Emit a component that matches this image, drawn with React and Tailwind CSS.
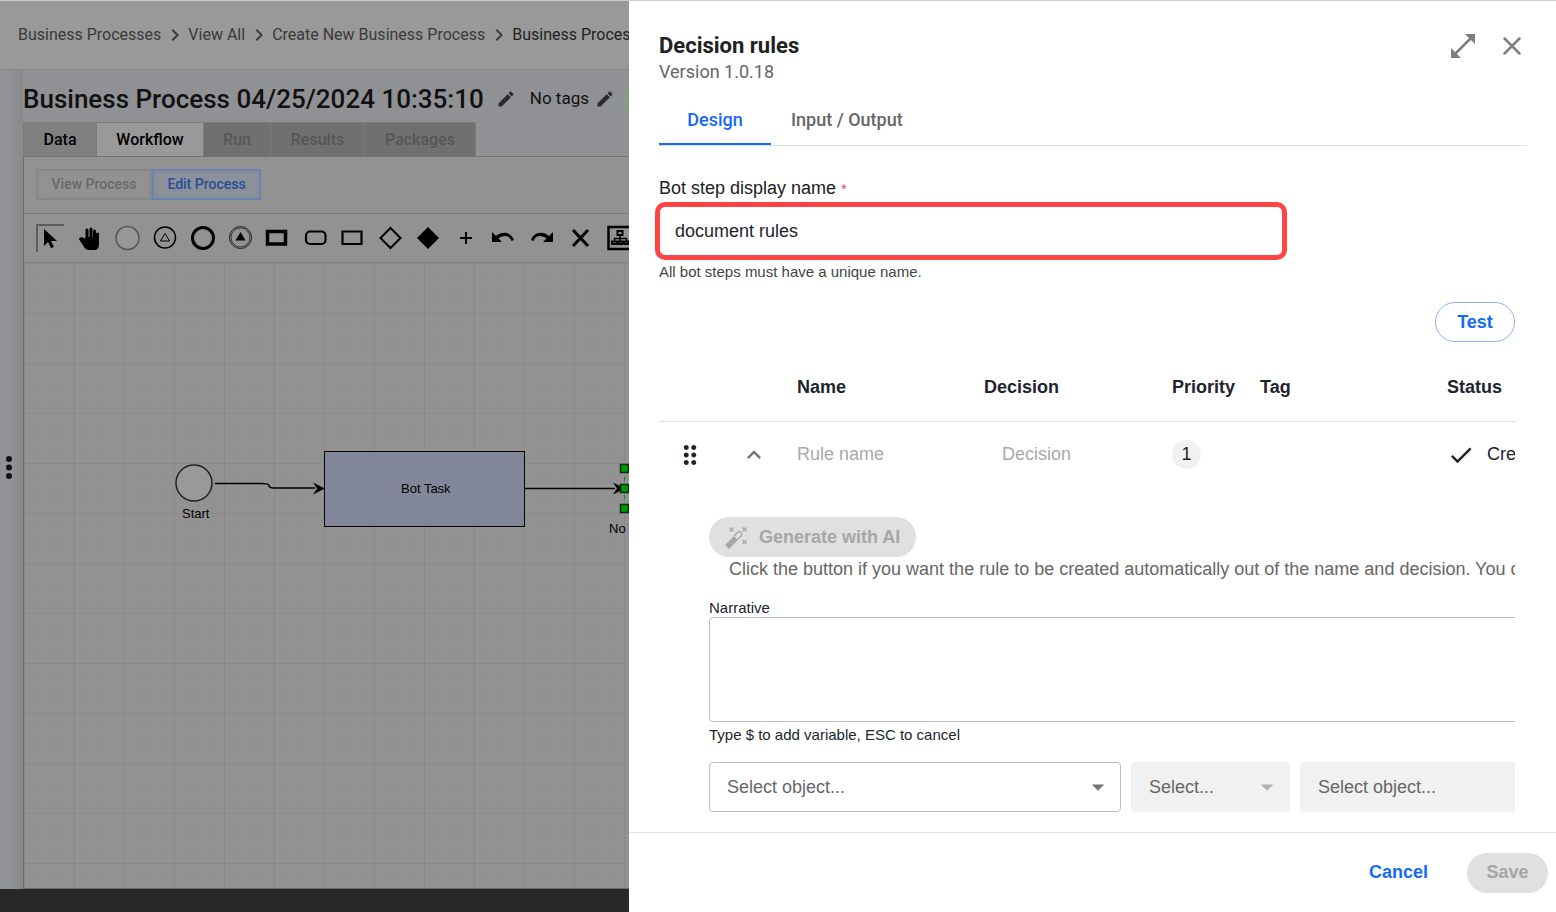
import React, { useState } from 'react';
import {
  MdArrowDropDown,
  MdCheck,
  MdChevronRight,
  MdDragIndicator,
  MdEdit,
  MdExpandLess,
} from 'react-icons/md';

const breadcrumbs = ['Business Processes', 'View All', 'Create New Business Process'];

const tabs = [
  { name: 'Data', style: 'w-[74px] bg-[#808080] text-black' },
  { name: 'Workflow', style: 'w-[107px] bg-[#999999] text-black' },
  { name: 'Run', style: 'w-[67px] bg-[#707070] text-[#565656]', disabled: true },
  { name: 'Results', style: 'w-[94px] bg-[#707070] text-[#565656]', disabled: true },
  { name: 'Packages', style: 'w-[111px] bg-[#707070] text-[#565656]', disabled: true },
];

const tools = [
  {
    name: 'Select',
    icon: <path d="M8 5v17l4-4 3 6 3-1-3-6h6z" fill="black" />,
  },
  {
    name: 'Pan',
    icon: (
      <g stroke="black" strokeLinecap="round" strokeLinejoin="round">
        <path d="M13 6v9M17 5v9M20.500 7v8M23.500 10v7" strokeWidth="3" />
        <path d="M12 14h12v6q0 5-4 5h-5q-3 0-5-4l-4-6q2-2 6 2z" strokeWidth="2" fill="black" />
      </g>
    ),
  },
  {
    name: 'Start event',
    icon: <circle cx="15.500" cy="14" r="11.500" fill="#979797" stroke="#555" strokeWidth="1.500" />,
  },
  {
    name: 'Signal event',
    icon: (
      <g stroke="black" fill="none">
        <circle cx="15" cy="13.500" r="10.500" strokeWidth="1.500" />
        <path d="M15 9.500l4.500 7.500h-9z" />
      </g>
    ),
  },
  {
    name: 'End event',
    icon: <circle cx="15" cy="14" r="10.500" fill="none" stroke="black" strokeWidth="3" />,
  },
  {
    name: 'Signal end event',
    icon: (
      <g>
        <circle cx="14.500" cy="13.500" r="11" fill="none" stroke="black" strokeWidth=".8" />
        <circle cx="14.500" cy="13.500" r="9.500" fill="none" stroke="black" strokeWidth=".6" />
        <path d="M14.500 8l5 8.500h-10z" fill="black" />
      </g>
    ),
  },
  {
    name: 'Bold task',
    icon: <path d="M3.500 7.500h18v12.500h-18z" fill="none" stroke="black" strokeWidth="3.500" />,
  },
  {
    name: 'Rounded task',
    icon: <rect x="4" y="7.500" width="19.500" height="12.500" rx="4" fill="none" stroke="black" strokeWidth="2.200" />,
  },
  {
    name: 'Task',
    icon: <path d="M2.500 7.500h19V20h-19z" fill="none" stroke="black" strokeWidth="2.200" />,
  },
  {
    name: 'Gateway',
    icon: <path d="M12.500 4l10 10-10 10-10-10z" fill="none" stroke="black" strokeWidth="2" />,
  },
  {
    name: 'Filled gateway',
    icon: <path d="M12 3l11 11-11 11-11-11z" fill="black" />,
  },
  {
    name: 'Add',
    icon: <path d="M12 8v12M6 14h12" stroke="black" strokeWidth="2" />,
  },
  {
    name: 'Undo',
    icon: <path d="M0 8v10h10l-3.500-3.500c6-4 11-3 13 2.500l2.500-1c-3-7.500-11-9.500-18-4z" fill="black" />,
  },
  {
    name: 'Redo',
    icon: <path d="M23 8v10H13l3.500-3.500c-6-4-11-3-13 2.500l-2.500-1c3-7.500 11-9.500 18-4z" fill="black" />,
  },
  {
    name: 'Delete',
    icon: <path d="M5 6l15 16M20 6L5 22" stroke="black" strokeWidth="3" />,
  },
  {
    name: 'Auto layout',
    icon: (
      <g fill="none" stroke="black">
        <path d="M2.500 3h24v22h-24z" strokeWidth="2.500" />
        <path d="M11.500 7h5v4h-5zM6 17.500h5V20H6zM12.500 17.500h4V20h-4zM18.500 17.500h4V20h-4z" strokeWidth="2" />
        <path d="M14 11v6M8.500 17v-2.500h12V17" strokeWidth="1.500" />
      </g>
    ),
  },
];

const ProcessDiagram = () => (
  <svg className="block" width="605" height="300" fill="none" fontFamily="'Liberation Sans', Arial, sans-serif" fontSize="13">
    <circle cx="170" cy="220" r="18" fill="#999999" stroke="#222222" strokeWidth="1.500" />
    <text x="158" y="255" fill="black">Start</text>
    <path d="M191 220.500h46q8 0 8 2t4 2.500h42" stroke="black" strokeWidth="1.500" />
    <path d="M301 225.500l-12-6 4 6-4 6z" fill="black" />
    <rect x="300.500" y="188.500" width="200" height="75" fill="#818799" stroke="black" />
    <text x="377" y="230" fill="black">Bot Task</text>
    <path d="M501 225.500h90" stroke="black" strokeWidth="1.500" />
    <path d="M601 225.500l-12-6 4 6-4 6z" fill="black" />
    <path d="M600.500 205v42" stroke="#009900" strokeDasharray="4 5" />
    {[205.5, 225.5, 245.5].map((y) => (
      <rect key={y} x="596.500" y={y - 4} width="8" height="8" fill="#009900" stroke="#0b2b0b" strokeWidth="1.500" />
    ))}
    <text x="585" y="270" fill="black">No</text>
  </svg>
);

const ProcessPage = () => (
  <main className="flex min-w-0 flex-col overflow-hidden whitespace-nowrap bg-[#8f9194] font-[Roboto,sans-serif]">
    <nav className="flex h-[69px] shrink-0 items-center border-b border-[#858688] bg-[#999999] pl-[18px] text-[16px] text-[#3a3a3a]">
      {breadcrumbs.map((name) => (
        <React.Fragment key={name}>
          <a href="#" className="shrink-0">{name}</a>
          <MdChevronRight className="mr-px ml-0.5 size-6 shrink-0" />
        </React.Fragment>
      ))}
      <span className="min-w-0 overflow-hidden text-[#222222]">Business Process</span>
    </nav>

    <div className="flex min-h-0 flex-1">
      <div className="flex w-[23px] shrink-0 items-center bg-linear-to-r from-[#909295] from-40% to-[#87898b] pb-6 pl-[6px]">
        <svg width="6" height="24" viewBox="0 0 6 24" fill="#111">
          <circle cx="3" cy="3" r="3" />
          <circle cx="3" cy="11.500" r="3" />
          <circle cx="3" cy="20" r="3" />
        </svg>
      </div>

      <div className="flex min-w-0 flex-1 flex-col">
        <div className="flex h-[52px] shrink-0 items-center pt-1.5 text-[#111]">
          <h1 className="text-[26px] font-medium">Business Process 04/25/2024 10:35:10</h1>
          <button aria-label="Edit name" className="ml-3 text-[#2a2a2a]"><MdEdit className="size-5" /></button>
          <span className="ml-3.5 text-[17px]">No tags</span>
          <button aria-label="Edit tags" className="ml-1.5 text-[#2a2a2a]"><MdEdit className="size-5" /></button>
          <span className="ml-2 h-5 w-16 shrink-0 bg-[#839c83]" />
        </div>

        <div className="flex h-[35px] shrink-0 border-b border-[#727272]">
          {tabs.map((tab) => (
            <button
              key={tab.name}
              disabled={tab.disabled}
              className={`h-[34px] shrink-0 border-t border-r border-[#7b7b7b] text-[16px] font-medium first:border-l ${tab.style}`}
            >
              {tab.name}
            </button>
          ))}
        </div>

        <div className="flex min-h-0 flex-1 flex-col border-b border-l border-[#6c6c6c] bg-[#929292]">
          <div className="flex h-14 shrink-0 items-start pt-3 pl-3 text-[14px] font-medium">
            <button disabled className="h-[31px] w-[116px] border border-[#858585] text-[#6a6a6a] shadow-[inset_0_0_4px_#858585]">
              View Process
            </button>
            <button className="h-[31px] w-[109px] border border-[#6480b0] bg-[#8b909a] text-[#274f97] shadow-[inset_0_0_4px_#6480b0]">
              Edit Process
            </button>
          </div>

          <div className="flex h-[50px] shrink-0 items-center gap-2.5 border-y border-t-[#7c7c7c] border-b-[#808080] pl-3">
            {tools.map((tool, i) => (
              <button
                key={tool.name}
                aria-label={tool.name}
                className={`size-7 shrink-0 ${i === 0 ? 'shadow-[inset_2px_2px_0_#5c5c5c]' : ''}`}
              >
                <svg viewBox="0 0 28 28" className="size-7">{tool.icon}</svg>
              </button>
            ))}
          </div>

          <div className="min-h-0 flex-1 overflow-hidden bg-[linear-gradient(#898989_1px,transparent_1px),linear-gradient(90deg,#898989_1px,transparent_1px),linear-gradient(#909090_1px,transparent_1px),linear-gradient(90deg,#909090_1px,transparent_1px)] bg-[size:50px_50px,50px_50px,12.5px_12.5px,12.5px_12.5px]">
            <ProcessDiagram />
          </div>
        </div>
      </div>
    </div>
    <footer className="h-[23px] shrink-0 bg-[#282828]" />
  </main>
);

const ObjectSelect = ({ label, placeholder, width, disabled }) => (
  <div className={`relative shrink-0 ${width}`}>
    <select
      aria-label={label}
      disabled={disabled}
      className={`h-[50px] w-full appearance-none rounded border pl-[17px] text-[18px] text-[#666666] opacity-100 ${
        disabled ? 'border-[#f1f1f1] bg-[#f1f1f1]' : 'border-[#bdbdbd] bg-white'
      }`}
    >
      <option>{placeholder}</option>
    </select>
    <MdArrowDropDown
      className={`pointer-events-none absolute top-2.5 right-2 size-[30px] ${disabled ? 'text-[#b0b0b0]' : 'text-[#757575]'}`}
    />
  </div>
);

const RulesTable = () => (
  <div className="mr-3 overflow-hidden">
    <table className="w-[1120px] table-fixed text-left text-[18px] text-[#20252d]">
      <colgroup>
        <col className="w-[70px]" />
        <col className="w-[68px]" />
        <col className="w-[187px]" />
        <col className="w-[188px]" />
        <col className="w-[88px]" />
        <col className="w-[187px]" />
        <col />
      </colgroup>
      <thead>
        <tr className="h-[67px] border-b border-[#dddddd]">
          <th />
          <th />
          <th>Name</th>
          <th>Decision</th>
          <th>Priority</th>
          <th>Tag</th>
          <th>Status</th>
        </tr>
      </thead>
      <tbody>
        <tr className="h-[67px]">
          <td className="pl-4">
            <button aria-label="Move rule" className="block"><MdDragIndicator className="size-[30px]" /></button>
          </td>
          <td className="pl-[11px]">
            <button aria-label="Collapse rule" className="block text-[#757575]"><MdExpandLess className="size-7" /></button>
          </td>
          <td>
            <input aria-label="Rule name" placeholder="Rule name" className="w-40 placeholder:text-[#a9a9a9]" />
          </td>
          <td className="pl-[18px]">
            <input aria-label="Decision" placeholder="Decision" className="w-36 placeholder:text-[#a9a9a9]" />
          </td>
          <td>
            <span className="flex size-[29px] items-center justify-center rounded-full bg-[#f1f1f1]">1</span>
          </td>
          <td />
          <td>
            <span className="flex items-center gap-3">
              <MdCheck className="size-7" />
              Created
            </span>
          </td>
        </tr>
        <tr>
          <td colSpan={7} className="pt-[29px] pl-[50px]">
            <button disabled className="flex h-10 w-[207px] items-center gap-2.5 rounded-full bg-[#e0e0e0] pl-4 font-bold text-[#a6a6a6]">
              <svg width="24" height="24" viewBox="0 0 24 24" fill="none" stroke="currentColor">
                <path d="M2 22L11 13" strokeWidth="5.500" />
                <path d="M9 11l4-4q1-1 2 0l1.500 1.500q1 1 0 2l-4 4" strokeWidth="1.400" />
                <path d="M4.500 2.500l4 4m0-4l-4 4M17.500 2.500l4 4m0-4l-4 4M17.500 15l4 4m0-4l-4 4" strokeWidth="1.300" />
              </svg>
              Generate with AI
            </button>
            <p className="pl-5 leading-6 text-[#666666]">
              Click the button if you want the rule to be created automatically out of the name and decision. You can edit the rule.
            </p>
            <label htmlFor="narrative" className="mt-[17px] block text-[15px] leading-[19px]">Narrative</label>
            <textarea id="narrative" className="block h-[105px] w-full resize-none rounded border border-[#bdbdbd]" />
            <p className="mt-[3px] text-[15px] leading-5">Type $ to add variable, ESC to cancel</p>
            <div className="mt-[17px] flex gap-2.5">
              <ObjectSelect label="Left object" placeholder="Select object..." width="w-[412px]" />
              <ObjectSelect label="Operator" placeholder="Select..." width="w-[159px]" disabled />
              <ObjectSelect label="Right object" placeholder="Select object..." width="w-[412px]" disabled />
            </div>
          </td>
        </tr>
      </tbody>
    </table>
  </div>
);

const RulesDrawer = () => {
  const [stepName, setStepName] = useState('document rules');

  return (
    <aside className="flex min-w-0 flex-col overflow-hidden bg-white font-['Liberation_Sans',Arial,sans-serif] text-[18px]">
      <div className="flex min-h-0 flex-1 flex-col pr-[29px] pl-[30px]">
        <header className="flex justify-between pt-[31px] font-[Roboto,sans-serif]">
          <div>
            <h2 className="text-[22px] leading-7 font-bold text-[#212121]">Decision rules</h2>
            <p className="leading-6 text-[#666666]">Version 1.0.18</p>
          </div>
          <div className="flex h-7 items-center gap-7 text-[#7b7f84]">
            <button aria-label="Expand">
              <svg width="24" height="24" viewBox="0 0 24 24" fill="currentColor">
                <path d="M14 0h10v10zM0 14v10h10z" />
                <path d="M4 20L20 4" stroke="currentColor" strokeWidth="2.500" />
              </svg>
            </button>
            <button aria-label="Close" className="pr-1.5">
              <svg width="18" height="18" viewBox="0 0 18 18" stroke="currentColor" strokeWidth="2.500" strokeLinecap="round">
                <path d="M1.500 1.500l15 15M16.500 1.500l-15 15" />
              </svg>
            </button>
          </div>
        </header>

        <div className="mt-[11px] flex h-[51px] shrink-0 border-b border-[#dddddd] font-[Roboto,sans-serif] font-medium">
          <button className="h-[50px] w-28 border-b-2 border-[#1469f5] text-[#1469f5]">Design</button>
          <button className="h-12 px-5 text-[#666666]">Input / Output</button>
        </div>

        <label htmlFor="step-name" className="mt-[30px] leading-6 text-[#212121]">
          Bot step display name <span className="text-[15px] text-[#e5484d]">*</span>
        </label>
        <input
          id="step-name"
          value={stepName}
          onChange={(e) => setStepName(e.target.value)}
          className="-ml-1 mt-px h-[58px] w-[632px] shrink-0 rounded-[10px] border-[5px] border-[#ff4444] px-[15px] text-[#20252d]"
        />
        <p className="mt-0.5 text-[15px] leading-5 text-[#444444]">All bot steps must have a unique name.</p>

        <button className="mt-5 mr-3 h-10 w-20 shrink-0 self-end rounded-full border border-[#8ab4f8] font-bold text-[#1469f5]">
          Test
        </button>
        <div className="mt-3 min-h-0 flex-1 overflow-hidden">
          <RulesTable />
        </div>
      </div>

      <footer className="flex h-20 shrink-0 items-center justify-end gap-[39px] border-t border-[#e3e3e3] pr-2 font-bold">
        <button className="text-[#1469f5]">Cancel</button>
        <button disabled className="h-10 w-[81px] rounded-full bg-[#e0e0e0] text-[#a6a6a6]">Save</button>
      </footer>
    </aside>
  );
};

export default function App() {
  return (
    <div className="grid h-screen grid-cols-[629fr_927fr] border-t border-[#cccccc]">
      <ProcessPage />
      <RulesDrawer />
    </div>
  );
}
